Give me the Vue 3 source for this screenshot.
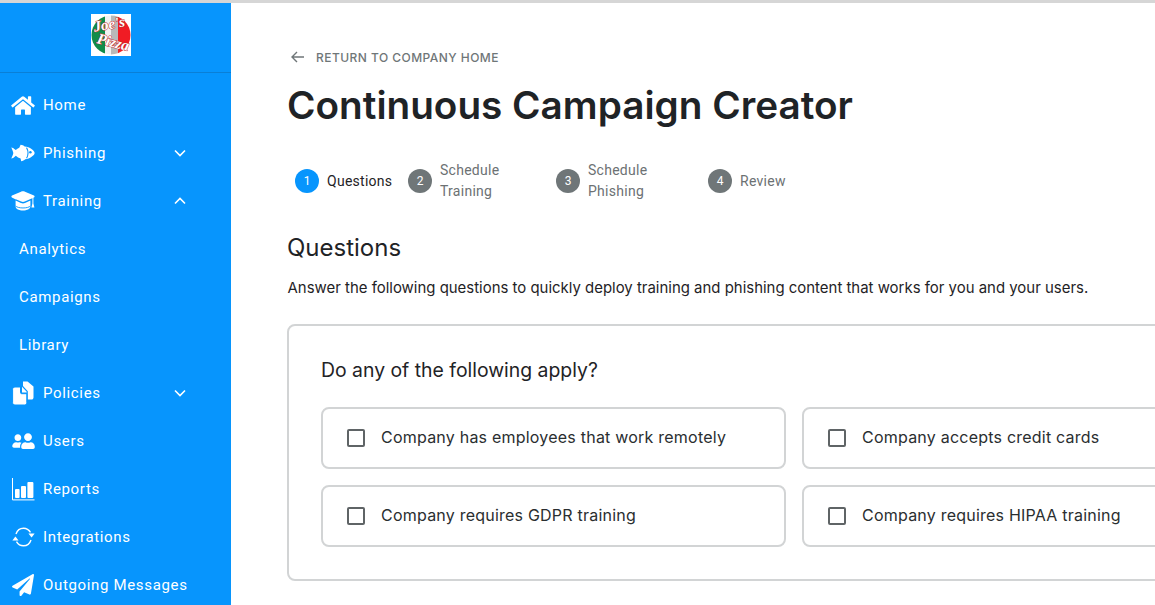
<script setup>
const navItems = [
  { label: 'Home', icon: 'home' },
  { label: 'Phishing', icon: 'fish', chevron: 'down' },
  { label: 'Training', icon: 'cap', chevron: 'up' },
  { label: 'Analytics', sub: true },
  { label: 'Campaigns', sub: true },
  { label: 'Library', sub: true },
  { label: 'Policies', icon: 'docs', chevron: 'down' },
  { label: 'Users', icon: 'users' },
  { label: 'Reports', icon: 'chart' },
  { label: 'Integrations', icon: 'sync' },
  { label: 'Outgoing Messages', icon: 'plane' },
]
const steps = [
  { n: 1, lines: ['Questions'], active: true },
  { n: 2, lines: ['Schedule', 'Training'], width: '101px' },
  { n: 3, lines: ['Schedule', 'Phishing'], width: '105px' },
  { n: 4, lines: ['Review'] },
]
const options = [
  'Company has employees that work remotely',
  'Company accepts credit cards',
  'Company requires GDPR training',
  'Company requires HIPAA training',
]
</script>

<template>
  <div class="page">
    <aside class="sidebar">
      <div class="brand">
        <svg class="logo" viewBox="0 0 40 42" width="40" height="42" role="img" aria-label="Joe's Pizza">
          <rect width="40" height="42" fill="#fff" />
          <defs>
            <clipPath id="logoDisc"><circle cx="20" cy="21" r="19.5" /></clipPath>
          </defs>
          <g clip-path="url(#logoDisc)">
            <rect x="0" y="0" width="14" height="42" fill="#118c4a" />
            <rect x="14" y="0" width="6" height="42" fill="#f2f2f2" />
            <rect x="20" y="0" width="7" height="42" fill="#b9b9b9" />
            <rect x="27" y="0" width="13" height="42" fill="#f01c24" />
          </g>
          <text x="19" y="15" class="logo-text" text-anchor="middle" transform="rotate(-10 19 15)">Joe's</text>
          <text x="21" y="33" class="logo-text" text-anchor="middle" transform="rotate(14 21 33)">Pizza</text>
        </svg>
      </div>
      <nav class="nav">
        <a v-for="item in navItems" :key="item.label" class="nav-item" :class="{ sub: item.sub }">
          <span v-if="!item.sub" class="nav-icon">
            <svg v-if="item.icon === 'home'" viewBox="0 0 576 512" width="24" height="21"><path fill="#fff" d="M280.37 148.26L96 300.11V464a16 16 0 0 0 16 16l112.06-.29a16 16 0 0 0 15.92-16V368a16 16 0 0 1 16-16h64a16 16 0 0 1 16 16v95.64a16 16 0 0 0 16 16.05L464 480a16 16 0 0 0 16-16V300L295.67 148.26a12.19 12.19 0 0 0-15.3 0zM571.6 251.47L488 182.56V44.05a12 12 0 0 0-12-12h-56a12 12 0 0 0-12 12v72.61L318.47 43a48 48 0 0 0-61 0L4.34 251.47a12 12 0 0 0-1.6 16.9l25.5 31A12 12 0 0 0 45.15 301l235.22-193.74a12.19 12.19 0 0 1 15.3 0L530.9 301a12 12 0 0 0 16.9-1.6l25.5-31a12 12 0 0 0-1.7-16.93z" /></svg>
            <svg v-else-if="item.icon === 'fish'" viewBox="0 0 25 18" width="25" height="18"><path fill="#fff" d="M0.3 3.2 C1.6 3.2 3.5 4.6 5 6 C6 5 7.2 4.2 8.6 3.6 L10 0.4 C11.6 0.5 13.2 1.3 14.2 2.2 C19.5 2.4 24.6 6.6 24.6 9 C24.6 11.4 19.6 15 14.8 15.6 C13.8 16.6 12.2 17.6 10.6 17.6 L10 14.8 C8.2 14.2 6.4 13.2 5 11.8 C3.5 13.3 1.7 14.6 0.3 14.8 C1 13.2 2.2 10.8 2.4 9 C2.2 7.2 1 4.8 0.3 3.2 Z" /><path d="M16.2 3.4 C18 6.6 18 11.2 16.2 14.4" fill="none" stroke="#0795fd" stroke-width="1.1" /><circle cx="20.2" cy="8.2" r="1.3" fill="#0795fd" /></svg>
            <svg v-else-if="item.icon === 'cap'" viewBox="0 0 24 20" width="24" height="20"><path fill="#fff" d="M10 0.7 C11.2 0.2 12.8 0.2 14 0.7 L23 4.4 C23.8 4.8 23.8 6 23 6.4 L13.8 10.6 C12.6 11.1 11.4 11.1 10.2 10.6 L4.8 8.2 L4.8 8.4 L0.9 6.5 C0.2 6 0.2 4.8 1 4.4 Z" /><path fill="#fff" d="M4.6 9.6 L10 12 C11.4 12.6 12.6 12.6 14 12 L19.4 9.6 V15.6 C19.4 18 16 19.6 12 19.6 C8 19.6 4.6 18 4.6 15.6 Z" /><path fill="#fff" d="M21.4 6.9 L22.4 6.4 V12.4 L23.4 16.4 H20.4 L21.4 12.4 Z" /><path d="M4.6 15 C7 17.6 17 17.6 19.4 15" fill="none" stroke="#0795fd" stroke-width="0.9" /></svg>
            <svg v-else-if="item.icon === 'docs'" viewBox="0 0 22 24" width="22" height="24"><path fill="#fff" d="M11 0.5 H15.5 L21.5 5.5 V16.5 C21.5 17.8 20.7 18.6 19.5 18.6 H15.8 V10.2 L11 5 Z" /><path fill="#fff" stroke="#0795fd" stroke-width="1" d="M3 6 H8.5 V11.5 C8.5 12.2 9 12.7 9.6 12.7 H14.8 V21.5 C14.8 23 13.8 24 12.4 24 H3 C1.6 24 0.6 23 0.6 21.5 V8.4 C0.6 7 1.6 6 3 6 Z" /><path fill="#fff" d="M10 5.8 L14.7 10.8 V11.4 H10 Z" /></svg>
            <svg v-else-if="item.icon === 'users'" viewBox="0 0 640 512" width="23" height="18"><g transform="translate(640 0) scale(-1 1)"><path fill="#fff" d="M192 256c61.9 0 112-50.1 112-112S253.9 32 192 32 80 82.1 80 144s50.1 112 112 112zm76.8 32h-8.3c-20.8 10-43.9 16-68.5 16s-47.6-6-68.5-16h-8.3C51.6 288 0 339.6 0 403.2V432c0 26.5 21.5 48 48 48h288c26.5 0 48-21.5 48-48v-28.8c0-63.6-51.6-115.2-115.2-115.2zM480 256c53 0 96-43 96-96s-43-96-96-96-96 43-96 96 43 96 96 96zm48 32h-3.8c-13.9 4.8-28.6 8-44.2 8s-30.3-3.2-44.2-8H432c-20.4 0-39.2 5.9-55.7 15.4 24.4 26.3 39.7 61.2 39.7 99.8v38.4c0 2.2-.5 4.3-.6 6.4H592c26.5 0 48-21.5 48-48 0-61.9-50.1-112-112-112z" /></g></svg>
            <svg v-else-if="item.icon === 'chart'" viewBox="0 0 23 23" width="23" height="23"><path d="M0.5 0 V21.9 H22.5" fill="none" stroke="#fff" stroke-width="1" /><rect x="3" y="11" width="4.6" height="9" rx="1" fill="#fff" /><rect x="9" y="8" width="5" height="12" rx="1" fill="#fff" /><rect x="15.4" y="4" width="6" height="16" rx="1" fill="#fff" /></svg>
            <svg v-else-if="item.icon === 'sync'" viewBox="0 0 23 20" width="23" height="20"><path d="M4 7 C5.2 3.4 8 1.2 11.5 1.2 C14.5 1.2 17 2.8 18.5 5.4" fill="none" stroke="#fff" stroke-width="1.4" /><path d="M19 13 C17.8 16.6 15 18.8 11.5 18.8 C8.5 18.8 6 17.2 4.5 14.6" fill="none" stroke="#fff" stroke-width="1.4" /><path d="M16.4 6.6 L22.6 6.6 L19.6 10.4 Z" fill="#fff" /><path d="M0.4 13.4 L6.6 13.4 L3.4 9.6 Z" fill="#fff" /></svg>
            <svg v-else-if="item.icon === 'plane'" viewBox="0 0 512 512" width="22" height="22"><path fill="#fff" d="M476 3.2L12.5 270.6c-18.1 10.4-15.8 35.6 2.2 43.2L121 358.4l287.3-253.2c5.5-4.9 13.3 2.6 8.6 8.3L176 407v80.5c0 23.6 28.5 32.9 42.5 15.8L282 426l124.6 52.2c14.2 6 30.4-2.9 33-18.2l72-432C515 7.8 493.3-6.8 476 3.2z" /></svg>
          </span>
          <span class="nav-label">{{ item.label }}</span>
          <svg v-if="item.chevron" class="chevron" viewBox="0 0 12 8" width="12" height="8">
            <polyline :points="item.chevron === 'down' ? '1,1.5 6,6.5 11,1.5' : '1,6.5 6,1.5 11,6.5'" fill="none" stroke="#fff" stroke-width="1.6" />
          </svg>
        </a>
      </nav>
    </aside>

    <main class="main">
      <a class="back">
        <svg viewBox="0 0 14 12" width="14" height="12"><path d="M13 6 H1.5 M6 1 L1 6 L6 11" fill="none" stroke="#6f7678" stroke-width="1.4" /></svg>
        <span>RETURN TO COMPANY HOME</span>
      </a>
      <h1 class="title">Continuous Campaign Creator</h1>

      <ol class="steps">
        <li v-for="step in steps" :key="step.n" class="step" :class="{ active: step.active }">
          <span class="bullet">{{ step.n }}</span>
          <span class="step-label" :style="step.width ? { width: step.width } : null">
            <span v-for="line in step.lines" :key="line" class="step-line">{{ line }}</span>
          </span>
        </li>
      </ol>

      <h2 class="section">Questions</h2>
      <p class="lead">Answer the following questions to quickly deploy training and phishing content that works for you and your users.</p>

      <section class="card">
        <h3 class="question">Do any of the following apply?</h3>
        <div class="options">
          <label v-for="opt in options" :key="opt" class="option">
            <span class="box"></span>
            <span class="option-text">{{ opt }}</span>
          </label>
        </div>
      </section>
    </main>
  </div>
</template>

<style>
html, body { margin: 0; overflow: hidden; background: #fff; }
</style>

<style scoped>
.page {
  display: flex;
  width: 1155px;
  height: 605px;
  box-sizing: border-box;
  border-top: 3px solid #d6d6d6;
  overflow: hidden;
  font-family: Inter, sans-serif;
}
.sidebar {
  flex: 0 0 231px;
  background: #0795fd;
  color: #fff;
  font-family: Roboto, sans-serif;
}
.brand {
  display: flex;
  height: 70px;
  box-sizing: border-box;
  padding: 11px 0 0 91px;
  border-bottom: 1px solid #0a7fd6;
}
.logo { display: block; }
.logo-text {
  font-family: "Liberation Serif", serif;
  font-style: italic;
  font-weight: 700;
  font-size: 15px;
  fill: #fff;
  stroke: #c0302f;
  stroke-width: 1px;
  paint-order: stroke;
}
.nav { padding-top: 8px; }
.nav-item {
  display: flex;
  align-items: center;
  height: 48px;
  padding-left: 11px;
  font-size: 15px;
  letter-spacing: 0.66px;
  color: #fff;
}
.nav-item.sub { padding-left: 19px; }
.nav-icon {
  display: flex;
  justify-content: center;
  align-items: center;
  width: 24px;
  margin-right: 8px;
}
.chevron { margin-left: auto; margin-right: 45px; }

.main {
  flex: 1;
  min-width: 0;
  padding: 45px 0 0 56px;
  overflow: hidden;
}
.back {
  display: flex;
  align-items: center;
  gap: 11px;
  padding-left: 4px;
  height: 18px;
  font-size: 12px;
  letter-spacing: 0.46px;
  font-weight: 500;
  color: #6f7678;
}
.title {
  margin: 16px 0 0;
  font-size: 38.7px;
  line-height: 46px;
  font-weight: 600;
  color: #1f2326;
  white-space: nowrap;
}
.steps {
  display: flex;
  gap: 15px;
  list-style: none;
  margin: 30px 0 0;
  padding: 0 0 0 8px;
  height: 46px;
  font-family: Roboto, sans-serif;
  font-size: 14px;
  letter-spacing: 0.27px;
  color: #6c7173;
}
.step { display: flex; align-items: center; gap: 8px; }
.step.active { color: #1f2326; }
.step.active .step-label { min-width: 66px; }
.bullet {
  display: flex;
  align-items: center;
  justify-content: center;
  width: 24px;
  height: 24px;
  border-radius: 50%;
  background: #6f7678;
  color: #fff;
  font-size: 12px;
  letter-spacing: 0;
}
.step.active .bullet { background: #0795fd; }
.step-label { display: flex; flex-direction: column; }
.step-line { line-height: 21px; white-space: nowrap; }
.section {
  margin: 29px 0 0;
  font-size: 24px;
  line-height: 30px;
  font-weight: 400;
  color: #1f2326;
}
.lead {
  margin: 14px 0 0;
  padding-left: 0.5px;
  font-size: 14.95px;
  line-height: 22px;
  color: #1f2326;
  white-space: nowrap;
}
.card {
  width: 1000px;
  height: 257px;
  box-sizing: border-box;
  margin-top: 25px;
  padding: 32px;
  border: 2px solid #d2d4d5;
  border-radius: 8px;
}
.question {
  margin: 0;
  font-size: 19.4px;
  line-height: 24px;
  font-weight: 400;
  color: #1f2326;
}
.options {
  display: grid;
  grid-template-columns: 465px 465px;
  gap: 16px;
  margin-top: 25px;
}
.option {
  display: flex;
  align-items: center;
  gap: 16px;
  height: 62px;
  box-sizing: border-box;
  padding-left: 24px;
  border: 2px solid #d2d4d5;
  border-radius: 8px;
  font-size: 16px;
  letter-spacing: 0.22px;
  color: #2a2e30;
  white-space: nowrap;
}
.option-text { margin-bottom: 2px; }
.box {
  width: 18px;
  height: 18px;
  box-shadow: inset 0 0 0 2px #5f6466;
  border-radius: 2px;
  flex: none;
}
</style>
